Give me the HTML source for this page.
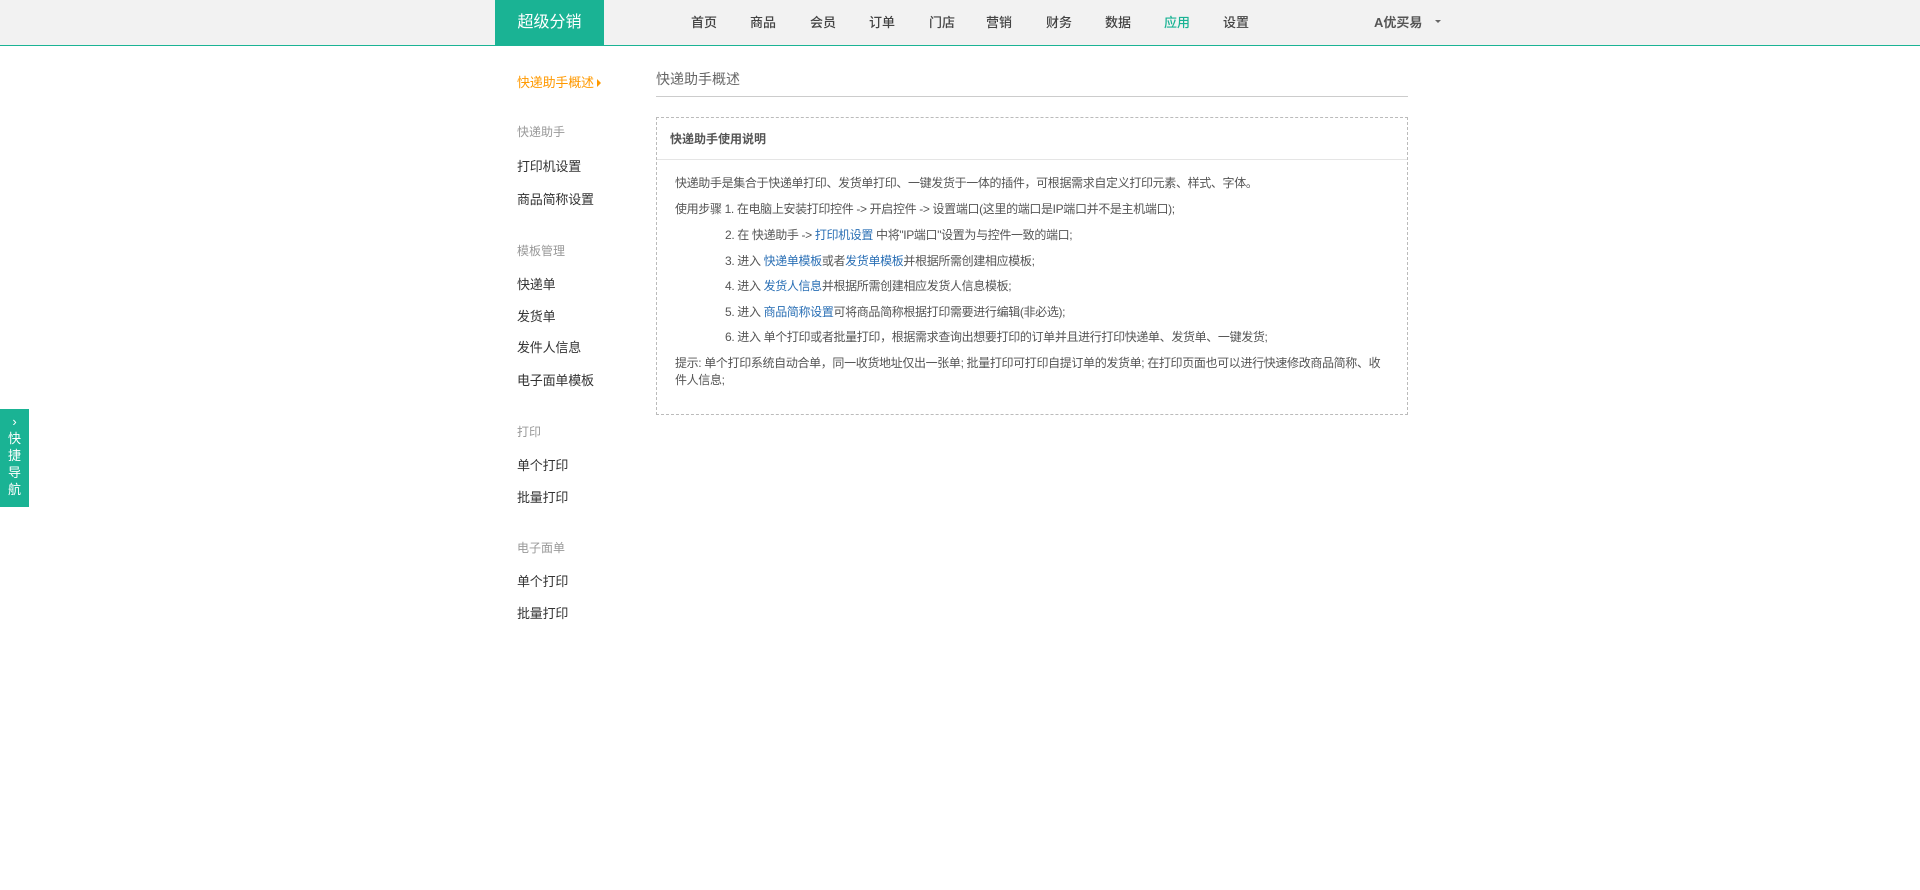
<!DOCTYPE html>
<html><head><meta charset="utf-8"><style>
*{margin:0;padding:0;box-sizing:border-box}
body{width:1920px;height:890px;background:#fff;font-family:"Liberation Sans","Noto Sans CJK SC",sans-serif;position:relative;overflow:hidden;color:#333}
.hd{position:absolute;left:0;top:0;width:1920px;height:46px;background:#f2f2f2;border-bottom:1px solid #1ab394}
.logo{position:absolute;left:495px;top:0;width:109px;height:45px;background:#1ab394;color:#fff;font-size:16px;line-height:45px;text-align:center}
.nav{position:absolute;top:0;line-height:45px;font-size:13px;color:#444;font-weight:500;transform:translateX(-50%)}
.abs{position:absolute;white-space:nowrap}
.side{font-size:13px;color:#333;letter-spacing:-0.2px}
.sh{font-size:12px;color:#999}
.box{position:absolute;left:656px;top:117px;width:752px;height:298px;border:1px dashed #bbb}
.bh{height:42px;border-bottom:1px solid #e5e5e5;font-size:12px;font-weight:bold;color:#555;line-height:42px;padding-left:13px;background:#fff}
.t{position:absolute;font-size:12px;color:#555;white-space:nowrap;line-height:14px;letter-spacing:-0.35px}
a{color:#2a6fb5;text-decoration:none}
</style></head><body>
<div class="hd">
<div class="logo">超级分销</div>
<div class="nav" style="left:704px">首页</div>
<div class="nav" style="left:763px">商品</div>
<div class="nav" style="left:823px">会员</div>
<div class="nav" style="left:882px">订单</div>
<div class="nav" style="left:942px">门店</div>
<div class="nav" style="left:999px">营销</div>
<div class="nav" style="left:1059px">财务</div>
<div class="nav" style="left:1118px">数据</div>
<div class="nav" style="left:1177px;color:#1ab394">应用</div>
<div class="nav" style="left:1236px">设置</div>
<div class="abs" style="left:1374px;top:0;line-height:45px;font-size:13px;font-weight:bold;color:#555">A优买易</div>
<div class="abs" style="left:1435px;top:20px;width:0;height:0;border-left:3px solid transparent;border-right:3px solid transparent;border-top:3px solid #666"></div>
</div>

<div class="abs side" style="left:517px;top:72px;color:#f90">快递助手概述<span style="display:inline-block;width:0;height:0;border-top:4px solid transparent;border-bottom:4px solid transparent;border-left:4px solid #f90;margin-left:3px"></span></div>
<div class="abs sh" style="left:517px;top:123px">快递助手</div>
<div class="abs side" style="left:517px;top:156px">打印机设置</div>
<div class="abs side" style="left:517px;top:189px">商品简称设置</div>
<div class="abs sh" style="left:517px;top:242px">模板管理</div>
<div class="abs side" style="left:517px;top:274px">快递单</div>
<div class="abs side" style="left:517px;top:306px">发货单</div>
<div class="abs side" style="left:517px;top:337px">发件人信息</div>
<div class="abs side" style="left:517px;top:370px">电子面单模板</div>
<div class="abs sh" style="left:517px;top:423px">打印</div>
<div class="abs side" style="left:517px;top:455px">单个打印</div>
<div class="abs side" style="left:517px;top:487px">批量打印</div>
<div class="abs sh" style="left:517px;top:539px">电子面单</div>
<div class="abs side" style="left:517px;top:571px">单个打印</div>
<div class="abs side" style="left:517px;top:603px">批量打印</div>

<div class="abs" style="left:656px;top:69px;font-size:14px;color:#666">快递助手概述</div>
<div class="abs" style="left:656px;top:96px;width:752px;height:1px;background:#ccc"></div>

<div class="box">
<div class="bh">快递助手使用说明</div>
<div class="t" style="left:18px;top:58px">快递助手是集合于快递单打印、发货单打印、一键发货于一体的插件，可根据需求自定义打印元素、样式、字体。</div>
<div class="t" style="left:18px;top:84px">使用步骤 1. 在电脑上安装打印控件 -&gt; 开启控件 -&gt; 设置端口(这里的端口是IP端口并不是主机端口);</div>
<div class="t" style="left:68px;top:110px">2. 在 快递助手 -&gt; <a>打印机设置</a> 中将"IP端口"设置为与控件一致的端口;</div>
<div class="t" style="left:68px;top:136px">3. 进入 <a>快递单模板</a>或者<a>发货单模板</a>并根据所需创建相应模板;</div>
<div class="t" style="left:68px;top:161px">4. 进入 <a>发货人信息</a>并根据所需创建相应发货人信息模板;</div>
<div class="t" style="left:68px;top:187px">5. 进入 <a>商品简称设置</a>可将商品简称根据打印需要进行编辑(非必选);</div>
<div class="t" style="left:68px;top:212px">6. 进入 单个打印或者批量打印，根据需求查询出想要打印的订单并且进行打印快递单、发货单、一键发货;</div>
<div class="t" style="left:18px;top:238px">提示: 单个打印系统自动合单，同一收货地址仅出一张单; 批量打印可打印自提订单的发货单; 在打印页面也可以进行快速修改商品简称、收</div>
<div class="t" style="left:18px;top:255px">件人信息;</div>
</div>

<div class="abs" style="left:0;top:409px;width:29px;height:98px;background:#1ab394;color:#fff;font-size:13px;text-align:center;line-height:17px;padding-top:4px;white-space:normal">›<br>快<br>捷<br>导<br>航</div>
</body></html>
